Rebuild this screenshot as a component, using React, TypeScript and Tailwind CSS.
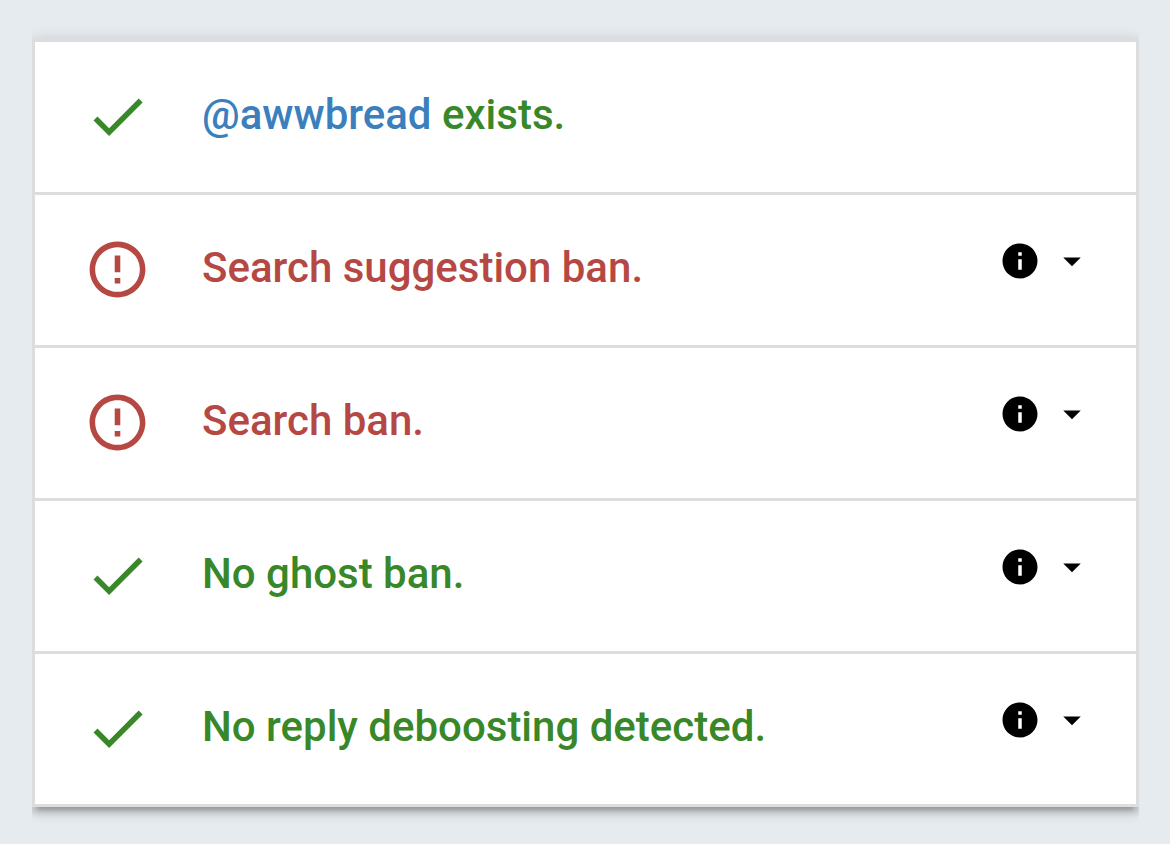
type Check = { ok: boolean; text: string; handle?: string; info?: boolean };

const checks: Check[] = [
  { ok: true, handle: '@awwbread', text: 'exists.' },
  { ok: false, text: 'Search suggestion ban.', info: true },
  { ok: false, text: 'Search ban.', info: true },
  { ok: true, text: 'No ghost ban.', info: true },
  { ok: true, text: 'No reply deboosting detected.', info: true },
];

function StatusIcon({ ok }: { ok: boolean }) {
  return (
    <svg viewBox="0 0 24 24" aria-hidden="true" className="mt-[21px] size-[67px] shrink-0 fill-current">
      {ok ? (
        <path d="M9 16.17L4.83 12l-1.42 1.41L9 19 21 7l-1.41-1.41z" />
      ) : (
        <path d="M11 15h2v2h-2zm0-8h2v6h-2zm.99-5C6.47 2 2 6.48 2 12s4.47 10 9.99 10C17.52 22 22 17.52 22 12S17.52 2 11.99 2zM12 20c-4.42 0-8-3.58-8-8s3.58-8 8-8 8 3.58 8 8-3.58 8-8 8z" />
      )}
    </svg>
  );
}

function Row({ check }: { check: Check }) {
  return (
    <li
      className={`flex h-[153px] items-start border-b-3 border-[#dddddd] pt-5 pr-[43px] pl-[49px] ${
        check.ok ? 'text-[#388728]' : 'text-[#b64844]'
      }`}
    >
      <StatusIcon ok={check.ok} />
      <p className="mt-7 ml-[51px] grow text-[42px] leading-[50px] font-medium">
        {check.handle && (
          <>
            <a href="#profile" className="text-[#3b7fbd]">
              {check.handle}
            </a>{' '}
          </>
        )}
        {check.text}
      </p>
      {check.info && (
        <button type="button" aria-label={`About: ${check.text}`} className="mt-[25px] flex items-center gap-2.5 text-black">
          <svg viewBox="0 0 24 24" aria-hidden="true" className="size-[42px] fill-current">
            <path d="M12 2C6.48 2 2 6.48 2 12s4.48 10 10 10 10-4.48 10-10S17.52 2 12 2zm1 15h-2v-6h2v6zm0-8h-2V7h2v2z" />
          </svg>
          <svg viewBox="0 0 24 24" aria-hidden="true" className="size-[42px] fill-current">
            <path d="M7 10l5 5 5-5z" />
          </svg>
        </button>
      )}
    </li>
  );
}

export default function App() {
  return (
    <main className="min-h-screen bg-[#e6ebef] pt-[39px] pr-[31px] pl-8 font-[Roboto,sans-serif]">
      <ul className="border-x-3 border-t-3 border-[#dddddd] bg-white shadow-[0_3px_15px_rgba(0,0,0,0.2),0_6px_6px_rgba(0,0,0,0.14),0_9px_3px_-6px_rgba(0,0,0,0.12)] [clip-path:inset(-40px_0)]">
        {checks.map((check) => (
          <Row key={check.text} check={check} />
        ))}
      </ul>
    </main>
  );
}
